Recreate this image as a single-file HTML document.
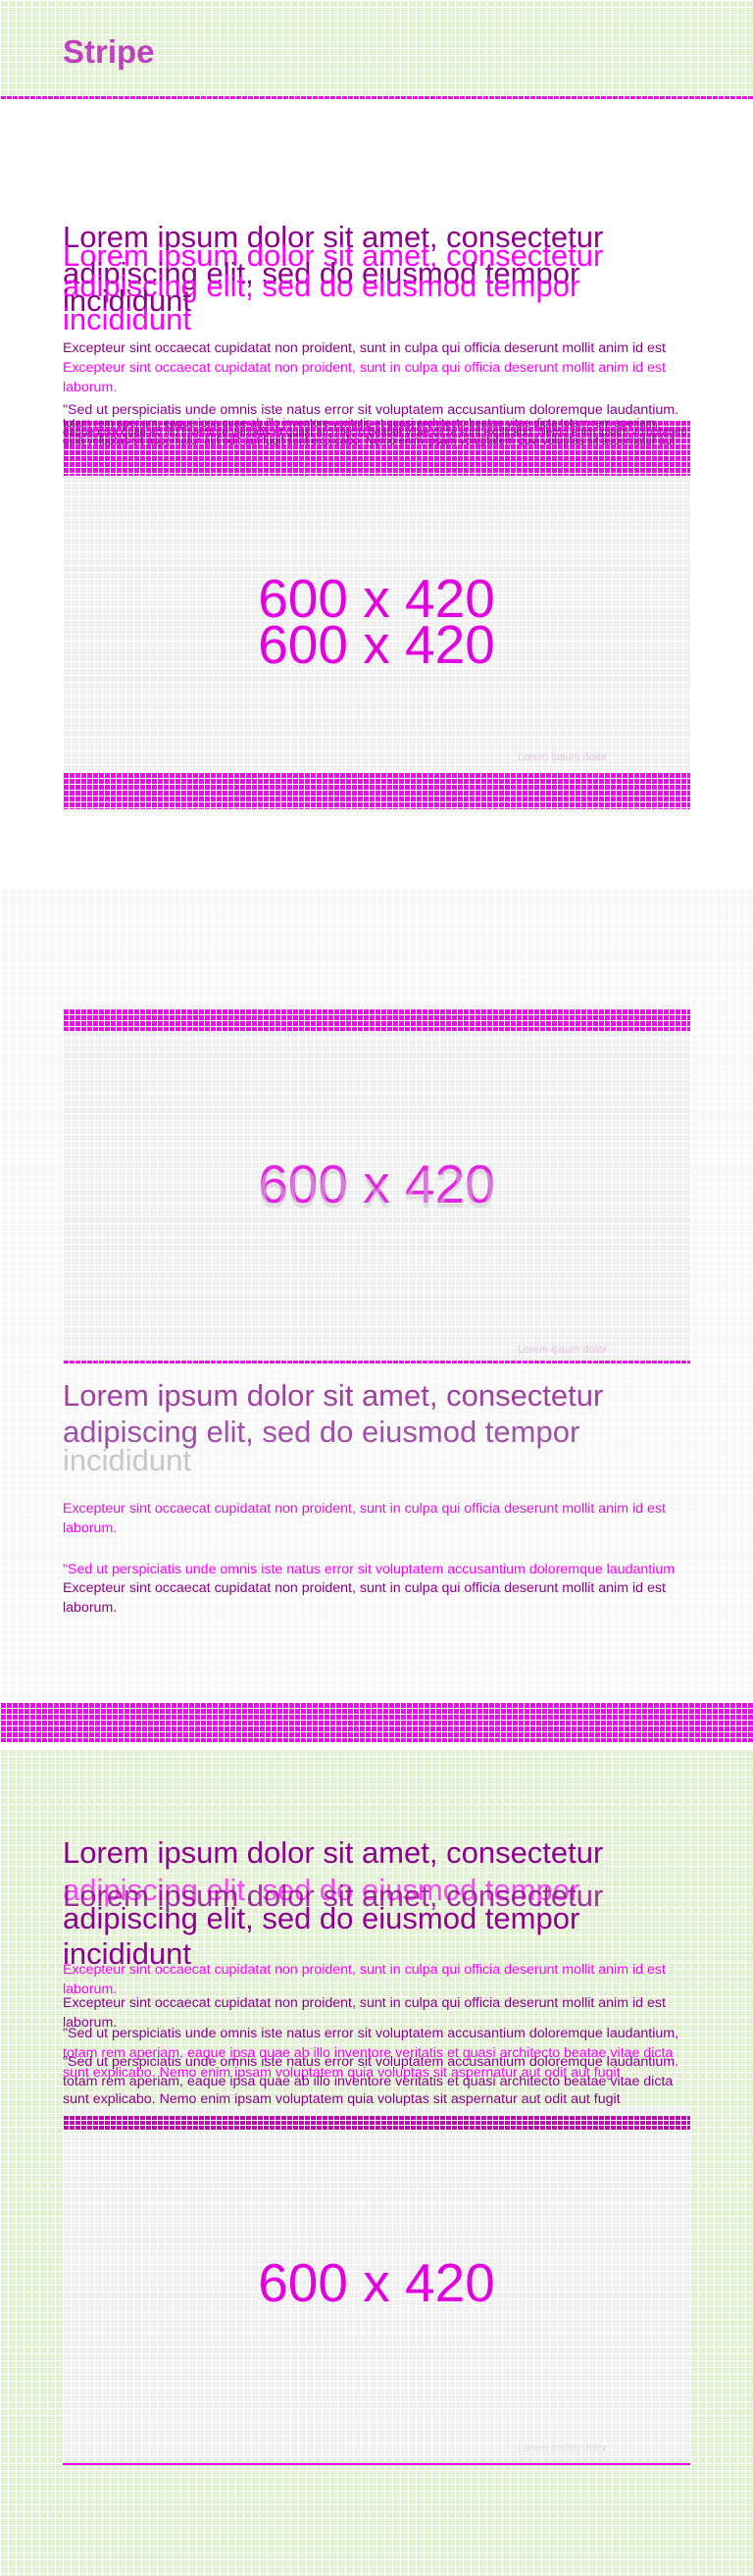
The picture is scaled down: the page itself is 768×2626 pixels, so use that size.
<!DOCTYPE html>
<html><head><meta charset="utf-8"><style>
*{margin:0;padding:0;box-sizing:border-box}
body{width:768px;height:2626px;position:relative;overflow:hidden;font-family:"Liberation Sans",sans-serif;background:#fff}
.abs{position:absolute;white-space:nowrap}
.green{background-color:#e2f1d0;background-image:linear-gradient(#fff 1px,transparent 1px),linear-gradient(90deg,#fff 1px,transparent 1px);background-size:8px 7px}
.gray{background-color:#f0f0f0;background-image:linear-gradient(#fff 1px,transparent 1px),linear-gradient(90deg,#fff 1px,transparent 1px);background-size:8px 7px}
.lgray{background-color:#f8f8f8;background-image:linear-gradient(#fff 1px,transparent 1px),linear-gradient(90deg,#fff 1px,transparent 1px);background-size:8px 7px}
.mag{background-color:#f0f;background-image:linear-gradient(#fff 1px,transparent 1px),linear-gradient(90deg,#fff 1px,transparent 1px);background-size:6px 6px}
.h{font-size:31px;line-height:29px;font-weight:400}
.p{font-size:14.2px;line-height:16px}
.big{font-size:55px;line-height:55px;color:#e000e0;width:640px;text-align:center}
.pu{color:#900090}.mg{color:#f0f}.gr{color:#bbb}
</style></head><body>
<div class="abs green" style="left:0;top:0;width:768px;height:97px"></div>
<div class="abs" style="left:64px;top:34px;font-size:33px;font-weight:bold;color:#c040c0">Stripe</div>
<div class="abs mag" style="left:0;top:97px;width:768px;height:4px"></div>

<div class="abs h pu" style="left:64px;top:227px">Lorem ipsum dolor sit amet, consectetur</div>
<div class="abs h mg" style="left:64px;top:246px">Lorem ipsum dolor sit amet, consectetur</div>
<div class="abs h pu" style="left:64px;top:264px">adipiscing elit, sed do eiusmod tempor</div>
<div class="abs h mg" style="left:64px;top:277px">adipiscing elit, sed do eiusmod tempor</div>
<div class="abs h pu" style="left:64px;top:292px">incididunt</div>
<div class="abs h mg" style="left:64px;top:311px">incididunt</div>
<div class="abs p pu" style="left:64px;top:347px">Excepteur sint occaecat cupidatat non proident, sunt in culpa qui officia deserunt mollit anim id est</div>
<div class="abs p mg" style="left:64px;top:367px">Excepteur sint occaecat cupidatat non proident, sunt in culpa qui officia deserunt mollit anim id est</div>
<div class="abs p mg" style="left:64px;top:387px">laborum.</div>
<div class="abs p pu" style="left:64px;top:410px">"Sed ut perspiciatis unde omnis iste natus error sit voluptatem accusantium doloremque laudantium.</div>
<div class="abs mag" style="left:64px;top:428px;width:640px;height:57px"></div>
<div class="abs pu" style="left:64px;top:428px;font-size:11.5px;line-height:9px;white-space:normal;width:640px">totam rem aperiam, eaque ipsa quae ab illo inventore veritatis et quasi architecto beatae vitae dicta totam rem aperiam, eaque ipsa quae ab illo inventore veritatis et quasi architecto beatae vitae dicta sunt explicabo. Nemo enim ipsam voluptatem quia voluptas sit aspernatur aut odit aut fugit sunt explicabo. Nemo enim ipsam voluptatem quia voluptas sit aspernatur aut</div>
<div class="abs gray" style="left:64px;top:485px;width:640px;height:302px"></div>
<div class="abs big" style="left:64px;top:583px">600 x 420</div>
<div class="abs big" style="left:64px;top:630px">600 x 420</div>
<div class="abs" style="left:528px;top:766px;font-size:11px;color:#e6c6e6">Lorem ipsum dolor</div>
<div class="abs mag" style="left:64px;top:787px;width:640px;height:38px"></div>

<div class="abs lgray" style="left:0;top:905px;width:768px;height:830px"></div>
<div class="abs mag" style="left:64px;top:1028px;width:640px;height:23px"></div>
<div class="abs gray" style="left:64px;top:1051px;width:640px;height:335px"></div>
<div class="abs big" style="left:64px;top:1180px;opacity:.85">600 x 420</div>
<div class="abs big" style="left:64px;top:1185px;color:#ccc;opacity:.5">600 x 420</div>
<div class="abs" style="left:528px;top:1370px;font-size:11px;color:#e6c6e6">Lorem ipsum dolor</div>
<div class="abs mag" style="left:64px;top:1386px;width:640px;height:4px"></div>
<div class="abs h" style="left:64px;top:1408px;color:#a040a0">Lorem ipsum dolor sit amet, consectetur</div>
<div class="abs h" style="left:64px;top:1445px;color:#a050a8">adipiscing elit, sed do eiusmod tempor</div>
<div class="abs h" style="left:64px;top:1474px;color:#c8c8c8">incididunt</div>
<div class="abs p mg" style="left:64px;top:1530px;color:#d020d0">Excepteur sint occaecat cupidatat non proident, sunt in culpa qui officia deserunt mollit anim id est</div>
<div class="abs p mg" style="left:64px;top:1550px">laborum.</div>
<div class="abs p mg" style="left:64px;top:1592px">"Sed ut perspiciatis unde omnis iste natus error sit voluptatem accusantium doloremque laudantium</div>
<div class="abs p pu" style="left:64px;top:1611px">Excepteur sint occaecat cupidatat non proident, sunt in culpa qui officia deserunt mollit anim id est</div>
<div class="abs p pu" style="left:64px;top:1631px">laborum.</div>
<div class="abs mag" style="left:0;top:1735px;width:768px;height:41px"></div>

<div class="abs green" style="left:0;top:1783px;width:768px;height:843px"></div>
<div class="abs h pu" style="left:64px;top:1874px">Lorem ipsum dolor sit amet, consectetur</div>
<div class="abs h mg" style="left:64px;top:1912px;opacity:.7">adipiscing elit, sed do eiusmod tempor</div>
<div class="abs h pu" style="left:64px;top:1918px;opacity:.8">Lorem ipsum dolor sit amet, consectetur</div>
<div class="abs h pu" style="left:64px;top:1941px">adipiscing elit, sed do eiusmod tempor</div>
<div class="abs h pu" style="left:64px;top:1977px">incididunt</div>
<div class="abs p mg" style="left:64px;top:2000px">Excepteur sint occaecat cupidatat non proident, sunt in culpa qui officia deserunt mollit anim id est</div>
<div class="abs p mg" style="left:64px;top:2020px">laborum.</div>
<div class="abs p pu" style="left:64px;top:2034px">Excepteur sint occaecat cupidatat non proident, sunt in culpa qui officia deserunt mollit anim id est</div>
<div class="abs p pu" style="left:64px;top:2054px">laborum.</div>
<div class="abs p pu" style="left:64px;top:2065px">"Sed ut perspiciatis unde omnis iste natus error sit voluptatem accusantium doloremque laudantium,</div>
<div class="abs p mg" style="left:64px;top:2085px">totam rem aperiam, eaque ipsa quae ab illo inventore veritatis et quasi architecto beatae vitae dicta</div>
<div class="abs p pu" style="left:64px;top:2094px">"Sed ut perspiciatis unde omnis iste natus error sit voluptatem accusantium doloremque laudantium.</div>
<div class="abs p mg" style="left:64px;top:2105px">sunt explicabo. Nemo enim ipsam voluptatem quia voluptas sit aspernatur aut odit aut fugit</div>
<div class="abs p pu" style="left:64px;top:2114px">totam rem aperiam, eaque ipsa quae ab illo inventore veritatis et quasi architecto beatae vitae dicta</div>
<div class="abs p pu" style="left:64px;top:2132px">sunt explicabo. Nemo enim ipsam voluptatem quia voluptas sit aspernatur aut odit aut fugit</div>
<div class="abs gray" style="left:64px;top:2147px;width:640px;height:361px"></div>
<div class="abs" style="left:64px;top:2156px;width:640px;height:16px;background-color:#d000c0;background-image:linear-gradient(#fff 1px,transparent 1px),linear-gradient(90deg,#fff 1px,transparent 1px);background-size:6px 5px"></div>
<div class="abs big" style="left:64px;top:2300px">600 x 420</div>
<div class="abs" style="left:528px;top:2490px;font-size:11px;color:#ddd">Lorem ipsum dolor</div>
<div class="abs" style="left:64px;top:2511px;width:640px;height:2px;background:#e000e0"></div>
</body></html>
